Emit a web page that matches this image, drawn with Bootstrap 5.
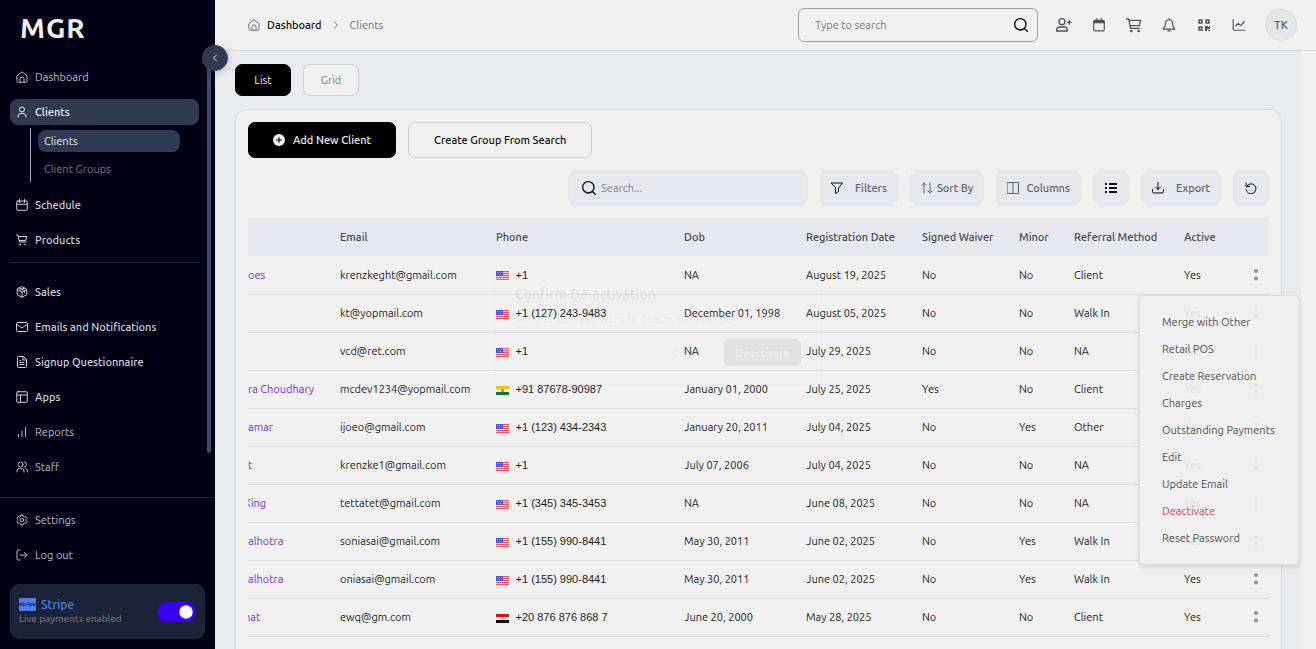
<!DOCTYPE html>
<html lang="en">
<head>
<meta charset="utf-8">
<meta name="viewport" content="width=device-width, initial-scale=1">
<title>Clients</title>
<link href="https://cdn.jsdelivr.net/npm/bootstrap@5.3.0/dist/css/bootstrap.min.css" rel="stylesheet">
<style>
:root{--ink:#020014;--slate:#2f3a52;--paper:#f1f1f1;--tool:#e6e8ed;--line:#d9dbdf}
body{font-family:Ubuntu,"Noto Sans","Liberation Sans",sans-serif;font-size:11px;line-height:16px;background:#eaebed;color:#1c1c1c}
a{text-decoration:none;color:inherit}
svg{fill:none;stroke:currentColor;stroke-width:2;stroke-linecap:round;stroke-linejoin:round;flex:none}
.i12{width:12px;height:12px}.i14{width:14px;height:14px}.i16{width:16px;height:16px}
button,input{font-size:11px!important;line-height:16px!important}
.sidebar{width:215px;background:var(--ink);color:#b9bcc8;z-index:3}
.brand{font-size:28px;line-height:32px;font-weight:700;letter-spacing:1px;color:#f1f1f1;padding:12px 20px 20px}
.menu{padding:0 16px 0 10px;display:flex;flex-direction:column;gap:9px}
.item{height:26px;border-radius:8px;padding:0 6px;display:flex;align-items:center;gap:7px}
.strong{font-weight:500;color:#d0d3de}
.on{background:var(--slate);color:#f1f1f1}
.sub{margin:-6px 19px 1px 20px;border-left:1px solid #aaa;padding:2px 0 2px 7px;height:54px}
.sub a{display:block;height:22px;line-height:22px;border-radius:8px;padding-left:6px;margin-bottom:6px;color:#73778a}
.sub a.on{color:#e8e8ec}
.rule{height:1px;background:#1b2032;margin:0 0 7px}
.foot{border-top:1px solid #1b2438;padding:9px 10px 10px}
.foot .menu{padding:0 0 16px}
.stripe{height:55px;border-radius:9px;background:#1a2338;padding:0 9px;color:#7c8394;font-size:10px;line-height:14px}
.stripe b{font-size:12px;font-weight:500;color:#4d80ec}
.logo{background:#4d80ec;color:#10203f;font-size:6px;font-weight:700;line-height:12px;width:17px;height:13px;text-align:center;border-radius:1px;margin-right:5px}
.stripe .form-check-input{width:39px;height:20px;margin:0;background-color:#3a00f0;border-color:#3a00f0;box-shadow:none}
.thumb{right:4px;top:57px;width:4px;height:396px;background:#3f4c66;border-radius:2px}
.fold{right:-13px;top:45px;width:26px;height:26px;background:var(--slate);color:#f1f1f1;border:1px solid #3c4760;box-shadow:0 2px 8px #0003}
.top{height:51px;background:var(--paper);border-bottom:1px solid #d5d7da;padding:0 19px 0 33px}
.crumb a{color:#0b0b12;font-weight:500}.crumb{color:#6d717c}
.crumb .i12:first-child{margin-right:7px}
.find{width:240px;height:34px;border:1px solid #9ca1b0;border-radius:6px;padding:0 8px 0 16px;color:#000}
.find input,.search input{background:none;border:0;outline:0;min-width:0;flex:1;padding:0}
.find input::placeholder{color:#767676}.search input::placeholder{color:#7b7f88}
.ico{width:35px;height:34px;padding:0;border:0;background:none;color:#4a5363}
.ico svg{display:block;margin:auto}
.ava{width:32px;height:32px;border:1px solid #d6d9dc;background:#e4e6e9;color:#4a5363;font-weight:500;padding:0;margin-left:9px}
.page{padding:13px 19px 0 20px;margin-right:15px;box-shadow:15px 0 0 var(--paper)}
.tab,.act{border-radius:7px;border:1px solid #ccd0d4;background:var(--paper);padding:0}
.tab{width:56px;height:32px;color:#7a7d83}
.tab.dark,.act.dark{background:#000;border-color:#000;color:#f1f1f1}
.act{height:36px;font-weight:500;color:#0c0c10;padding:0 24px}
.wide{padding:0 25px}
.panel{margin-top:13px;border:1px solid var(--line);border-radius:12px 12px 0 0;background:var(--paper);padding:12px 12px 0}
.bar{display:flex;gap:12px}
.tool,.search{height:36px;background:var(--tool);border:1px solid #e3e5ea;border-radius:8px;color:#5d626e}
.tool{min-width:36px;padding:0 10px;font-weight:500;display:flex;align-items:center;justify-content:center;gap:4px}
.tool svg,.search svg{color:#08080c}
.tool .grey{color:#5d626e}
.far{gap:12px}
.mid{gap:7px}
.search{width:240px;padding:0 12px}
.search svg{margin-right:4px}
.grid{table-layout:fixed;width:100%;margin:0}
.grid th{height:38px;padding:0;background:var(--tool);font-weight:500;color:#45474c}
.grid td{height:38px;padding:0;border-bottom:1px solid var(--line);white-space:nowrap}
.grid td:first-child{color:#7c2bd6}
.cut{margin-left:-4px}
.num{font-family:"Liberation Sans",Arial,sans-serif}
.grid .dots{display:block;width:26px;height:24px;padding:0;border:0;background:none;color:#8c939b}
.dots svg{display:block;margin:auto}
.dialog{left:495px;top:275px;width:327px;height:110px;padding:9px 20px 18px 19px;border:1px solid #00000003;color:#0000000e;pointer-events:none;z-index:1}
.dialog h2{font-size:14px;line-height:18px;font-weight:500;margin:0;color:#00000018}
.dialog button{height:27px;border:0;border-radius:5px;background:none;color:#00000010;padding:0 19px}
.dialog .fill{background:#00000010;color:#ffffff70;width:77px;font-weight:500;padding:0}
.pop{right:16px;top:295px;width:161px;padding:13px 0 12px;background:#f0f0f0e6;border:1px solid #dededf;border-radius:6px;box-shadow:0 2px 5px #0002;z-index:2}
.pop a{display:block;height:27px;line-height:27px;padding-left:22px;color:#4f4f52}
.pop a.red{color:#e8384f}
</style>
</head>
<body class="overflow-hidden">
<svg width="0" height="0" class="position-absolute">
<symbol id="home" viewBox="0 0 24 24"><path d="M2 9.500 12 1.500l10 8V20a2.500 2.500 0 0 1-2.500 2.500h-15A2.500 2.500 0 0 1 2 20zM8 22v-6.500a4 3.500 0 0 1 8 0V22"/></symbol>
<symbol id="user" viewBox="0 0 24 24"><circle cx="12" cy="7" r="5"/><path d="M4 22v-2a6 6 0 0 1 6-5h4a6 6 0 0 1 6 5v2"/></symbol>
<symbol id="cal" viewBox="0 0 24 24"><rect x="1.500" y="4" width="21" height="18.500" rx="2"/><path d="M2 10.500h20M7 1v6M17 1v6"/></symbol>
<symbol id="cart" viewBox="0 0 24 24"><path d="M1 2h3l3 14h13M5 5h17l-3 8H7"/><circle cx="8" cy="21" r="1"/><circle cx="18" cy="21" r="1"/></symbol>
<symbol id="box" viewBox="0 0 24 24"><path d="m12 1.500 9.500 5v11l-9.500 5-9.500-5v-11zM2.500 7 12 12l9.500-5M12 12v10M7 4l10 5v4M16.500 4 7 9"/></symbol>
<symbol id="mail" viewBox="0 0 24 24"><rect x="1" y="3" width="22" height="18" rx="2"/><path d="m2 7 10 7 10-7"/></symbol>
<symbol id="doc" viewBox="0 0 24 24"><path d="M14 1H5a2 2 0 0 0-2 2v18a2 2 0 0 0 2 2h14a2 2 0 0 0 2-2V8zM14 1v7h7M8 9h2M8 13h8M8 17h8"/></symbol>
<symbol id="apps" viewBox="0 0 24 24"><rect x="1.500" y="1.500" width="21" height="21" rx="2"/><path d="M2 8h20M9 8v14"/></symbol>
<symbol id="bars" viewBox="0 0 24 24"><path d="M5 21v-4M12 21V10M19 21V3"/></symbol>
<symbol id="team" viewBox="0 0 24 24"><circle cx="9" cy="7" r="5"/><path d="M2 22v-2a5 5 0 0 1 5-5h4a5 5 0 0 1 5 5v2M16 2a5 5 0 0 1 0 10M23 22v-2a5 5 0 0 0-4-5"/></symbol>
<symbol id="gear" viewBox="0 0 24 24"><path d="M10 2h4l1 3 2 1 3-.6 2 3.500-2 2.100v2l2 2.100-2 3.500-3-.6-2 1-1 3h-4l-1-3-2-1-3 .6-2-3.500 2-2.100v-2L2 8.900l2-3.500L7 6l2-1z"/><circle cx="12" cy="12" r="3.500"/></symbol>
<symbol id="out" viewBox="0 0 24 24"><path d="M8 2H4a2 2 0 0 0-2 2v16a2 2 0 0 0 2 2h4M8 12h14M17 7l5 5-5 5"/></symbol>
<symbol id="lens" viewBox="0 0 24 24"><circle cx="11" cy="11" r="8.500"/><path d="m17.500 17.500 4 4"/></symbol>
<symbol id="us" viewBox="0 0 13 9"><g stroke="none"><path fill="#f5cfd3" d="M0 0h13v9H0z"/><path fill="#e8585e" d="M0 0h13v1H0zM0 2h13v1H0zM0 4h13v1H0zM0 6h13v1H0zM0 8h13v1H0z"/><path fill="#4b53d6" d="M0 0h7v5H0z"/><path fill="#a4a8f0" d="M1 1h1v1H1zM3 1h1v1H3zM5 1h1v1H5zM2 3h1v1H2zM4 3h1v1H4z"/></g></symbol>
<symbol id="in" viewBox="0 0 13 9"><g stroke="none"><path fill="#e9c414" d="M0 0h13v3H0z"/><path fill="#e6eede" d="M0 3h13v3H0z"/><path fill="#0c7a2b" d="M0 6h13v3H0z"/><circle cx="6.500" cy="4.500" r="1.500" fill="#5f9a90"/></g></symbol>
<symbol id="eg" viewBox="0 0 13 9"><g stroke="none"><path fill="#d8141c" d="M0 0h13v3H0z"/><path fill="#f0ece4" d="M0 3h13v3H0z"/><path fill="#111" d="M0 6h13v3H0z"/><circle cx="6.500" cy="4.500" r="1.300" fill="#e2b23a"/></g></symbol>
<symbol id="more" viewBox="0 0 4 12"><g fill="currentColor" stroke="none"><circle cx="2" cy="2" r="2"/><circle cx="2" cy="9.500" r="2"/></g></symbol>
</svg>
<div class="d-flex vh-100">
<aside class="sidebar d-flex flex-column flex-shrink-0 position-relative">
  <div class="brand">MGR</div>
  <nav class="menu">
    <a href="#" class="item"><svg class="i12"><use href="#home"/></svg>Dashboard</a>
    <a href="#" class="item strong on"><svg class="i12"><use href="#user"/></svg>Clients</a>
    <div class="sub"><a href="#" class="on">Clients</a><a href="#">Client Groups</a></div>
    <a href="#" class="item strong"><svg class="i12"><use href="#cal"/></svg>Schedule</a>
    <a href="#" class="item strong"><svg class="i12"><use href="#cart"/></svg>Products</a>
    <div class="rule"></div>
    <a href="#" class="item strong"><svg class="i12"><use href="#box"/></svg>Sales</a>
    <a href="#" class="item strong"><svg class="i12"><use href="#mail"/></svg>Emails and Notifications</a>
    <a href="#" class="item strong"><svg class="i12"><use href="#doc"/></svg>Signup Questionnaire</a>
    <a href="#" class="item strong"><svg class="i12"><use href="#apps"/></svg>Apps</a>
    <a href="#" class="item"><svg class="i12"><use href="#bars"/></svg>Reports</a>
    <a href="#" class="item"><svg class="i12"><use href="#team"/></svg>Staff</a>
  </nav>
  <div class="foot mt-auto">
    <nav class="menu">
      <a href="#" class="item"><svg class="i12"><use href="#gear"/></svg>Settings</a>
      <a href="#" class="item"><svg class="i12"><use href="#out"/></svg>Log out</a>
    </nav>
    <div class="stripe d-flex align-items-center justify-content-between">
      <label for="live"><span class="d-flex align-items-center"><span class="logo">stripe</span><b>Stripe</b></span>Live payments enabled</label>
      <div class="form-switch p-0"><input class="form-check-input float-none d-block" type="checkbox" role="switch" id="live" checked></div>
    </div>
  </div>
  <div class="thumb position-absolute"></div>
  <button class="fold position-absolute rounded-circle p-0 d-flex align-items-center justify-content-center" aria-label="Collapse"><svg class="i12" viewBox="0 0 24 24"><path d="m15 6-6 6 6 6"/></svg></button>
</aside>
<div class="flex-grow-1 d-flex flex-column" style="min-width:0">
  <header class="top d-flex align-items-center flex-shrink-0">
    <nav class="crumb d-flex align-items-center me-auto"><svg class="i12"><use href="#home"/></svg><a href="#">Dashboard</a><svg class="i12 mx-2" viewBox="0 0 24 24"><path d="m9 6 6 6-6 6"/></svg>Clients</nav>
    <div class="find d-flex align-items-center me-2"><input type="text" placeholder="Type to search" aria-label="Type to search"><svg class="i16"><use href="#lens"/></svg></div>
    <button class="ico" aria-label="Add user"><svg class="i16" viewBox="0 0 24 24"><circle cx="9" cy="7" r="4.500"/><path d="M1 21v-1a5 5 0 0 1 5-5h6a5 5 0 0 1 5 5v1zM20 5v6M17 8h6"/></svg></button>
    <button class="ico" aria-label="Calendar"><svg class="i14" viewBox="0 0 24 24"><rect x="3" y="4" width="18" height="18" rx="2"/><path d="M3 6h18M3 8h18M8 1v5M16 1v5"/></svg></button>
    <button class="ico" aria-label="Cart"><svg class="i16" viewBox="0 0 24 24"><path d="M1 3h3l3 14h13M5 5h17l-2 8H7"/><circle cx="8" cy="21" r="1"/><circle cx="19" cy="21" r="1"/></svg></button>
    <button class="ico" aria-label="Alerts"><svg class="i14" viewBox="0 0 24 24"><path d="M12 1v2M12 3a6 6 0 0 0-6 6c0 5-1 7-4 10h20c-3-3-4-5-4-10a6 6 0 0 0-6-6M10 22h4"/></svg></button>
    <button class="ico" aria-label="QR code"><svg class="i14" viewBox="0 0 14 14"><path d="M2 2h3v3H2zM9 2h3v3H9zM2 9h3v3H2z" style="stroke-width:1.500"/><path d="M8 8h3v1h1V8h1v3h-3v2H8zM11 12h2v1h-2z" fill="currentColor" stroke="none"/></svg></button>
    <button class="ico" aria-label="Charts"><svg class="i14" viewBox="0 0 24 24"><path d="M2 3v16a2 2 0 0 0 2 2h18M6 14l4-5 5 4 6-7"/></svg></button>
    <button class="ava rounded-circle">TK</button>
  </header>
  <main class="page flex-grow-1 overflow-visible">
    <div class="bar"><button class="tab dark">List</button><button class="tab">Grid</button></div>
    <section class="panel">
      <div class="bar">
        <button class="act dark d-flex align-items-center"><svg class="i12 me-2" viewBox="0 0 24 24"><circle cx="12" cy="12" r="12" fill="#f1f1f1" stroke="none"/><path stroke="#000" d="M12 7v10M7 12h10"/></svg>Add New Client</button>
        <button class="act wide">Create Group From Search</button>
      </div>
      <div class="bar justify-content-end my-2 py-1">
        <div class="search d-flex align-items-center"><svg class="i16"><use href="#lens"/></svg><input type="text" placeholder="Search..." aria-label="Search clients"></div>
        <button class="tool far"><svg class="i12" viewBox="0 0 24 24"><path d="M1 2h22l-8 10v7l-6 4V12z"/></svg>Filters</button>
        <button class="tool"><svg class="i12 grey" viewBox="0 0 24 24"><path d="M6 22V2M2 6l4-4 4 4M18 2v20M14 18l4 4 4-4"/></svg>Sort By</button>
        <button class="tool mid"><svg class="i12 grey" viewBox="0 0 24 24"><path d="M1 1h22v22H1zM12 1v22"/></svg>Columns</button>
        <button class="tool" aria-label="List view"><svg class="i12" viewBox="0 0 12 12"><path d="M4 2h8M4 6h8M4 10h8M0 2h2M0 6h2M0 10h2" stroke-linecap="butt"/></svg></button>
        <button class="tool far"><svg class="i12" viewBox="0 0 24 24"><path d="M12 1v14M7 10l5 5 5-5M1 15v4a3 3 0 0 0 3 3h16a3 3 0 0 0 3-3v-4"/></svg>Export</button>
        <button class="tool" aria-label="Refresh"><svg class="i12" viewBox="0 0 24 24"><path d="M2 2v7h7M3 9a10 10 0 1 1-1 6"/></svg></button>
      </div>
      <div class="overflow-hidden">
      <table class="grid">
        <colgroup><col style="width:92px"><col style="width:156px"><col style="width:188px"><col style="width:122px"><col style="width:116px"><col style="width:97px"><col style="width:55px"><col style="width:110px"><col><col style="width:26px"></colgroup>
        <thead><tr><th></th><th>Email</th><th>Phone</th><th>Dob</th><th>Registration Date</th><th>Signed Waiver</th><th>Minor</th><th>Referral Method</th><th>Active</th><th></th></tr></thead>
        <tbody id="rows"></tbody>
      </table>
      </div>
    </section>
  </main>
</div>
</div>
<div class="dialog position-absolute d-flex flex-column">
  <h2>Confirm De-activation</h2>
  <div class="mt-2">Are you sure you want to deactivate this user</div>
  <div class="mt-auto d-flex justify-content-end"><button>Cancel</button><button class="fill">Deactivate</button></div>
</div>
<div class="pop position-absolute">
  <a href="#">Merge with Other</a><a href="#">Retail POS</a><a href="#">Create Reservation</a><a href="#">Charges</a><a href="#">Outstanding Payments</a><a href="#">Edit</a><a href="#">Update Email</a><a href="#" class="red">Deactivate</a><a href="#">Reset Password</a>
</div>
<script>
const clients = [
 ['oes','krenzkeght@gmail.com','us','+1','NA','August 19, 2025','No','No','Client'],
 ['','kt@yopmail.com','us','+1 (127) 243-9483','December 01, 1998','August 05, 2025','No','No','Walk In'],
 ['','vcd@ret.com','us','+1','NA','July 29, 2025','No','No','NA'],
 ['ra Choudhary','mcdev1234@yopmail.com','in','+91 87678-90987','January 01, 2000','July 25, 2025','Yes','No','Client'],
 ['amar','ijoeo@gmail.com','us','+1 (123) 434-2343','January 20, 2011','July 04, 2025','No','Yes','Other'],
 ['t','krenzke1@gmail.com','us','+1','July 07, 2006','July 04, 2025','No','No','NA'],
 ['King','tettatet@gmail.com','us','+1 (345) 345-3453','NA','June 08, 2025','No','No','NA'],
 ['alhotra','soniasai@gmail.com','us','+1 (155) 990-8441','May 30, 2011','June 02, 2025','No','Yes','Walk In'],
 ['alhotra','oniasai@gmail.com','us','+1 (155) 990-8441','May 30, 2011','June 02, 2025','No','Yes','Walk In'],
 ['hat','ewq@gm.com','eg','+20 876 876 868 7','June 20, 2000','May 28, 2025','No','No','Client']
];
const more = '<td><button class="dots" aria-label="More"><svg width="4" height="12"><use href="#more"/></svg></button></td>';
document.getElementById('rows').innerHTML = clients.map(([name, mail, flag, phone, ...rest]) =>
 `<tr><td><a href="#"${/^(King|hat)$/.test(name) ? ' class="cut"' : ''}>${name}</a></td><td>${mail}</td><td><svg width="13" height="9" class="me-1"><use href="#${flag}"/></svg> <span class="num">${phone}</span></td>${rest.map(v => `<td>${v}</td>`).join('')}<td>Yes</td>${more}</tr>`).join('')
 + `<tr><td colspan="9"></td>${more}</tr>`;
</script>
<script src="https://cdn.jsdelivr.net/npm/bootstrap@5.3.0/dist/js/bootstrap.bundle.min.js"></script>
</body>
</html>
